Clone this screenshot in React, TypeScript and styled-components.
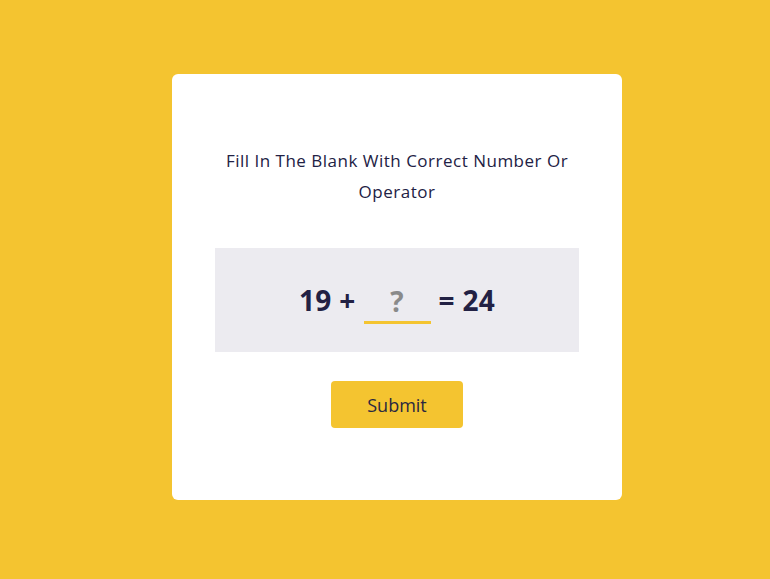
import React from "react";
import styled, { createGlobalStyle } from "styled-components";

const Global = createGlobalStyle`
  html, body { margin: 0; padding: 0; background: #f4c430; }
  body { font-family: "Open Sans", "Noto Sans", sans-serif; }
`;

const Page = styled.div`
  min-height: 579px;
  display: flex;
  justify-content: center;
  align-items: flex-start;
  padding: 74px 0 0 24px;
  box-sizing: border-box;
`;

const Card = styled.div`
  width: 450px;
  height: 426px;
  background: #ffffff;
  border-radius: 6px;
  box-sizing: border-box;
  padding: 71px 43px 0;
  display: flex;
  flex-direction: column;
  align-items: center;
`;

const Title = styled.p`
  margin: 0;
  text-align: center;
  font-size: 17px;
  line-height: 31px;
  color: #222144;
  font-weight: 500;
  letter-spacing: 0.5px;
`;

const EquationBox = styled.div`
  margin-top: 41px;
  width: 100%;
  height: 104px;
  background: #ecebf0;
  display: flex;
  align-items: center;
  justify-content: center;
  gap: 8px;
  font-size: 28px;
  font-weight: 700;
  color: #222144;
`;

const Term = styled.span`
  line-height: 1;
  letter-spacing: 0.3px;
`;

const Blank = styled.input`
  width: 67px;
  height: 42px;
  box-sizing: border-box;
  margin-top: 6px;
  border: none;
  border-bottom: 3px solid #f4c430;
  background: transparent;
  text-align: center;
  font-family: inherit;
  font-size: 28px;
  font-weight: 700;
  color: #8a8a8a;
  outline: none;
  padding: 0 0 2px;
  &::placeholder { color: #8a8a8a; opacity: 1; }
`;

const Submit = styled.button`
  margin-top: 29px;
  width: 132px;
  height: 47px;
  border: none;
  border-radius: 4px;
  background: #f4c430;
  color: #2a2840;
  font-family: inherit;
  font-size: 18px;
  font-weight: 500;
  cursor: pointer;
`;

export default function App() {
  return (
    <>
      <Global />
      <Page>
        <Card>
          <Title>Fill In The Blank With Correct Number Or Operator</Title>
          <EquationBox>
            <Term>19 +</Term>
            <Blank placeholder="?" />
            <Term>= 24</Term>
          </EquationBox>
          <Submit>Submit</Submit>
        </Card>
      </Page>
    </>
  );
}
